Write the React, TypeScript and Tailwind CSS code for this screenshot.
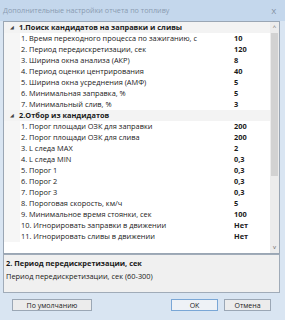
import React from 'react';

const groups = [
  {
    title: '1.Поиск кандидатов на заправки и сливы',
    rows: [
      ['1. Время переходного процесса по зажиганию, с', '10'],
      ['2. Период передискретизации, сек', '120'],
      ['3. Ширина окна анализа (АКР)', '8'],
      ['4. Период оценки центрирования', '40'],
      ['5. Ширина окна усреднения  (АМФ)', '5'],
      ['6. Минимальная заправка, %', '5'],
      ['7. Минимальный слив, %', '3'],
    ],
  },
  {
    title: '2.Отбор из кандидатов',
    rows: [
      ['1. Порог площади ОЗК для заправки', '200'],
      ['2. Порог площади ОЗК для слива', '200'],
      ['3. L следа MAX', '2'],
      ['4. L следа MIN', '0,3'],
      ['5. Порог 1', '0,3'],
      ['6. Порог 2', '0,3'],
      ['7. Порог 3', '0,3'],
      ['8. Пороговая скорость, км/ч', '5'],
      ['9. Минимальное время стоянки, сек', '100'],
      ['10. Игнорировать заправки в движении', 'Нет'],
      ['11. Игнорировать сливы в движении', 'Нет'],
    ],
  },
];

const App = () => {
  return (
    <div className="w-[285px] h-[320px] bg-[#c4d7ec] flex flex-col overflow-hidden font-['Open_Sans',sans-serif] text-[7.4px] text-[#1a1a1a]">
      {/* title bar */}
      <div className="h-[21px] flex items-center justify-between px-[3px] shrink-0">
        <span className="text-[#8a9bb1] text-[7.2px]">Дополнительные настройки отчета по топливу</span>
        <span className="text-[#7b8796] text-[8px] mr-[6px]">X</span>
      </div>

      <div className="flex-1 flex flex-col px-[3px] pr-[5px] bg-[#d9e5f2]">
        {/* property grid */}
        <div className="h-[233px] flex border border-[#9aa6b4] bg-white shrink-0">
          <div className="flex-1 flex flex-col">
            {groups.map((g) => (
              <React.Fragment key={g.title}>
                <div className="h-[11px] flex items-center bg-[#f3f3f3]">
                  <span className="w-[15px] pl-[6px] text-[5px] text-[#444]">◢</span>
                  <span className="font-bold">{g.title}</span>
                </div>
                {g.rows.map(([label, value]) => (
                  <div key={label} className="h-[11px] flex items-center">
                    <span className="w-[16px] self-stretch bg-[#f6f6f6]" />
                    <span className="w-[213px] pl-[1px] truncate">{label}</span>
                    <span className="font-bold pl-[1px]">{value}</span>
                  </div>
                ))}
              </React.Fragment>
            ))}
          </div>
          {/* scrollbar */}
          <div className="w-[9px] flex flex-col bg-[#ececec]">
            <div className="h-[11px] flex items-center justify-center text-[6px] text-[#666]">^</div>
            <div className="h-[143px] mx-[1px] bg-[#d2d2d2]" />
            <div className="flex-1" />
            <div className="h-[11px] flex items-center justify-center text-[6px] text-[#666]">v</div>
          </div>
        </div>

        {/* description */}
        <div className="h-[39px] border border-[#a0abb8] bg-[#f0f0f0] px-[2px] pt-[3px] flex flex-col gap-[2px] shrink-0">
          <span className="font-bold">2. Период передискретизации, сек</span>
          <span>Период передискретизации, сек (60-300)</span>
        </div>

        {/* buttons */}
        <div className="flex items-center mt-[6px] px-[9px]">
          <button className="w-[80px] h-[12px] border border-[#9ba7b5] bg-[#ececec] text-[7px] leading-none">По умолчанию</button>
          <div className="flex-1" />
          <button className="w-[47px] h-[12px] border border-[#7aa7d6] bg-[#eef2f6] text-[7px] leading-none mr-[6px]">OK</button>
          <button className="w-[47px] h-[12px] border border-[#9ba7b5] bg-[#ececec] text-[7px] leading-none">Отмена</button>
        </div>
      </div>
    </div>
  );
};

export default App;
